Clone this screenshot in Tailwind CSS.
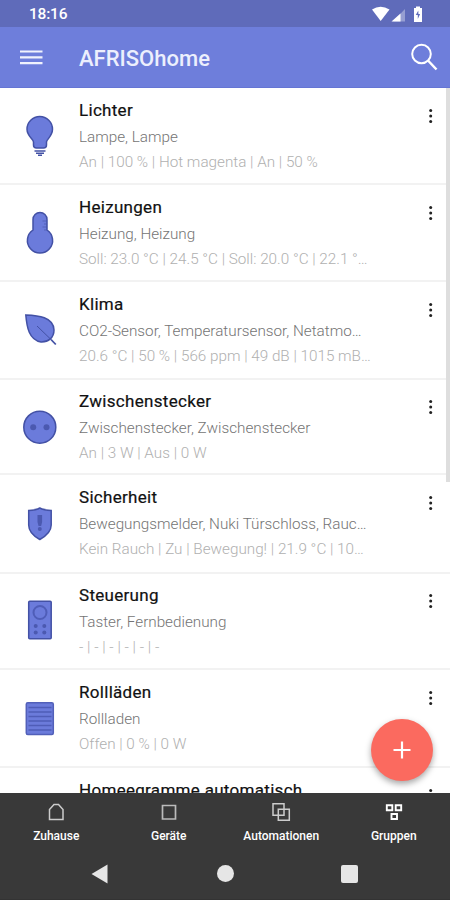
<!DOCTYPE html>
<html lang="de">
<head>
<meta charset="utf-8">
<title>AFRISOhome</title>
<script src="https://cdn.jsdelivr.net/npm/@tailwindcss/browser@4"></script>
</head>
<body class="w-[450px] h-[900px] overflow-hidden bg-white font-[Roboto,sans-serif]">
<div class="relative flex flex-col w-[450px] h-[900px] overflow-hidden">
  <div class="h-[27px] shrink-0 bg-[#5f6bba] flex items-center justify-between pl-[29px] pr-[27px] text-white">
    <span class="text-[15.500px] font-medium leading-none pt-[2px] tracking-[-0.200px]">18:16</span>
    <svg class="w-[51px] h-[17px] mt-[1px]" viewBox="0 0 51 17" fill="#fff">
      <path d="M0 3.500Q8.500-2 17.500 3.500L8.700 15Z"/>
      <path d="M33 3V15.500H21Z" opacity=".35"/><path d="M28.500 7.500V15.500H19.500Z"/>
      <path d="M42 2h2V0.500h4V2h2v14h-8z"/><path d="M46.300 4.500L43.800 9h2v4l2.300-5h-1.700z" fill="#5f6bba"/>
    </svg>
  </div>
  <header class="h-[61px] shrink-0 bg-[#6e7edb] border-b border-[#6575d4] flex items-center pl-[20px] pr-[12px] text-white">
    <svg class="w-[23px] h-[16px]" viewBox="0 0 23 16" stroke="#f0f2fd" stroke-width="2.200"><path d="M0 2.500H22.500M0 8.300H22.500M0 14.100H22.500"/></svg>
    <h1 class="ml-[36px] pt-[3px] text-[22px] font-medium leading-none grow text-[#eceffd]">AFRISOhome</h1>
    <svg class="w-[28px] h-[28px]" viewBox="0 0 28 28" fill="none" stroke="#fff" stroke-width="2"><circle cx="11.500" cy="11" r="9.300"/><path d="M18 17.500L26.500 26.500" stroke-width="2.500"/></svg>
  </header>
  <main id="list" class="grow min-h-0 overflow-hidden flex flex-col"></main>
  <nav class="h-[53px] shrink-0 bg-[#393939] grid grid-cols-4 text-white text-[12px] font-medium leading-none">
    <div class="flex flex-col items-center pt-[9px] gap-[8px]"><svg class="w-[20px] h-[20px]" viewBox="0 0 20 20" fill="none" stroke="#ccc" stroke-width="1.500"><path d="M3.500 17.500V7.500L8 2.500H12.500L17 7.500V17.500Z"/></svg>Zuhause</div>
    <div class="flex flex-col items-center pt-[9px] gap-[8px]"><svg class="w-[20px] h-[20px]" viewBox="0 0 20 20" fill="none" stroke="#bbb" stroke-width="1.700"><path d="M3.500 3.500h13v13.500h-13z"/></svg>Geräte</div>
    <div class="flex flex-col items-center pt-[9px] gap-[8px]"><svg class="w-[20px] h-[20px]" viewBox="0 0 20 20" fill="none" stroke="#ccc" stroke-width="1.500"><path d="M2 1.700h11v11.500h-11zM7.300 7.300h11v11h-11z"/></svg>Automationen</div>
    <div class="flex flex-col items-center pt-[9px] gap-[8px]"><svg class="w-[20px] h-[20px]" viewBox="0 0 20 20" fill="none" stroke="#fff" stroke-width="1.900"><path d="M2.800 3.200h5.500v5h-5.500zM11.700 3.200h5.500v5h-5.500zM7.500 12h5.500v5h-5.500z"/></svg>Gruppen</div>
  </nav>
  <footer class="h-[54px] shrink-0 bg-[#393939] border-b border-[#333] grid grid-cols-[91px_17px_109px_18px_106px_18px] items-center">
    <span></span>
    <svg class="w-[17px] h-[20px] mt-[2px]" viewBox="0 0 17 20"><path d="M0.500 10L16.500 0.500V19.500Z" fill="#e6e6e6"/></svg>
    <span></span>
    <span class="w-[17px] h-[17px] mt-[2px] rounded-full bg-[#e6e6e6]"></span>
    <span></span>
    <span class="w-[17px] h-[18px] mt-[2px] rounded-[2px] bg-[#e6e6e6]"></span>
  </footer>
  <div class="absolute right-0 top-[88px] w-[4px] h-[394px] bg-[#dedede]"></div>
  <button class="absolute left-[371px] top-[719px] w-[62px] h-[62px] rounded-full bg-[#fb6a5f] flex items-center justify-center shadow-[0_3px_6px_rgba(0,0,0,0.35)]">
    <svg class="w-[18px] h-[18px]" viewBox="0 0 18 18" stroke="#fff" stroke-width="2.200"><path d="M9 0.500V17.500M0.500 9H17.500"/></svg>
  </button>
</div>
<script>
const icons = {
  bulb: '<path d="M13.500 31V28C13.500 25.500 7 22 7 15.300A12.500 12.500 0 0 1 32.500 15.300C32.500 22 26.500 25.500 26.500 28V31Q26.500 34 23.500 34H16.500Q13.500 34 13.500 31Z"/><path d="M14.500 37H25.500M16 39.300H24M18 41.300H22" stroke-width="1.500"/>',
  thermo: '<path d="M13 9.500A7 7 0 0 1 27 9.500V20A12.600 12.600 0 1 1 13 20Z"/><path d="M22.500 11h4M24 14h2.500M22.500 17h4M24 20h2.500" stroke-width=".6"/>',
  leaf: '<path d="M5.800 6C18 6.500 33.500 8 34 21C34 28.500 28.500 33.300 21 33C9 31 6.800 18 5.800 6Z"/><path d="M17 17L31 30.500" stroke-width="1"/><path d="M31 30.500L35.800 35.500" stroke-width="1.800"/>',
  socket: '<circle cx="19.800" cy="20.200" r="16"/><circle cx="13.200" cy="20.200" r="3" fill="#4b59b0" stroke="none"/><circle cx="26.500" cy="20.200" r="3" fill="#4b59b0" stroke="none"/>',
  shield: '<path d="M19.800 6C23.500 8 27.500 8.300 31.200 8.500V23C31.200 30 26 34 19.800 37.500C13.500 34 8.700 30 8.700 23V8.500C12.500 8.300 16.500 8 19.800 6Z"/><path d="M17.500 13h4.600v7l-1 4h-2.600l-1-4z" fill="#4b59b0" stroke="none"/><circle cx="19.800" cy="27" r="2" fill="#4b59b0" stroke="none"/>',
  remote: '<rect x="8.700" y="3.200" width="22.500" height="37.500" rx="1"/><circle cx="20" cy="14.500" r="6.500" stroke-width="2" stroke="#4f5db8"/><g fill="#4b59b0" stroke="none"><circle cx="15.700" cy="28" r="2"/><circle cx="24.300" cy="28" r="2"/><circle cx="15.700" cy="34.500" r="2"/><circle cx="24.300" cy="34.500" r="2"/></g>',
  blind: '<rect x="6.300" y="4.800" width="27" height="31.700" rx="1.500" stroke="#5260b9"/><path d="M8.500 9.500h23M8.500 14h23M8.500 18.500h23M8.500 23h23M8.500 27.500h23M8.500 32h23" stroke-width="1.500" stroke="#4f5db8"/>'
};
// icon, icon top offset, row height, top padding, title, devices, values
const rows = [
  ['bulb',26,97,12,'Lichter','Lampe, Lampe','An | 100 % | Hot magenta | An | 50 %'],
  ['thermo',25,97,12,'Heizungen','Heizung, Heizung','Soll: 23.0 °C | 24.5 °C | Soll: 20.0 °C | 22.1 °…'],
  ['leaf',27,98,12,'Klima','CO2-Sensor, Temperatursensor, Netatmo…','20.6 °C | 50 % | 566 ppm | 49 dB | 1015 mB…'],
  ['socket',27,95,11,'Zwischenstecker','Zwischenstecker, Zwischenstecker','An | 3 W | Aus | 0 W'],
  ['shield',27,99,12,'Sicherheit','Bewegungsmelder, Nuki Türschloss, Rauc…','Kein Rauch | Zu | Bewegung! | 21.9 °C | 10…'],
  ['remote',24,96,11,'Steuerung','Taster, Fernbedienung','- | - | - | - | - | -'],
  ['blind',28,98,12,'Rollläden','Rollladen','Offen | 0 % | 0 W'],
  ['',0,98,12,'Homeegramme automatisch','','']
];
document.getElementById('list').innerHTML = rows.map(r => `
<section class="shrink-0 flex items-start border-b-2 border-[#f2f2f2]" style="height:${r[2]}px">
  <svg class="w-[40px] h-[44px] ml-[20px] shrink-0" style="margin-top:${r[1]}px" viewBox="0 0 40 44" fill="#6b7bdb" stroke="#4351a5" stroke-width="1.500">${icons[r[0]] || ''}</svg>
  <div class="ml-[19px] w-[320px] whitespace-nowrap" style="padding-top:${r[3]}px">
    <div class="h-[20px] leading-[20px] text-[17px] tracking-[0.3px] text-[#111] [-webkit-text-stroke:0.2px_#111]">${r[4]}</div>
    <div class="mt-[8px] h-[19px] leading-[19px] text-[15.250px] font-light text-[#747474]">${r[5]}</div>
    <div class="mt-[6px] h-[19px] leading-[19px] text-[15.250px] font-light text-[#b0b0b0]">${r[6]}</div>
  </div>
  <svg class="w-[4px] h-[16px] ml-[30px]" style="margin-top:${r[3]+8}px" viewBox="0 0 4 16" fill="#222"><circle cx="1.700" cy="2.500" r="1.500"/><circle cx="1.700" cy="8" r="1.500"/><circle cx="1.700" cy="13.500" r="1.500"/></svg>
</section>`).join('');
</script>
</body>
</html>
